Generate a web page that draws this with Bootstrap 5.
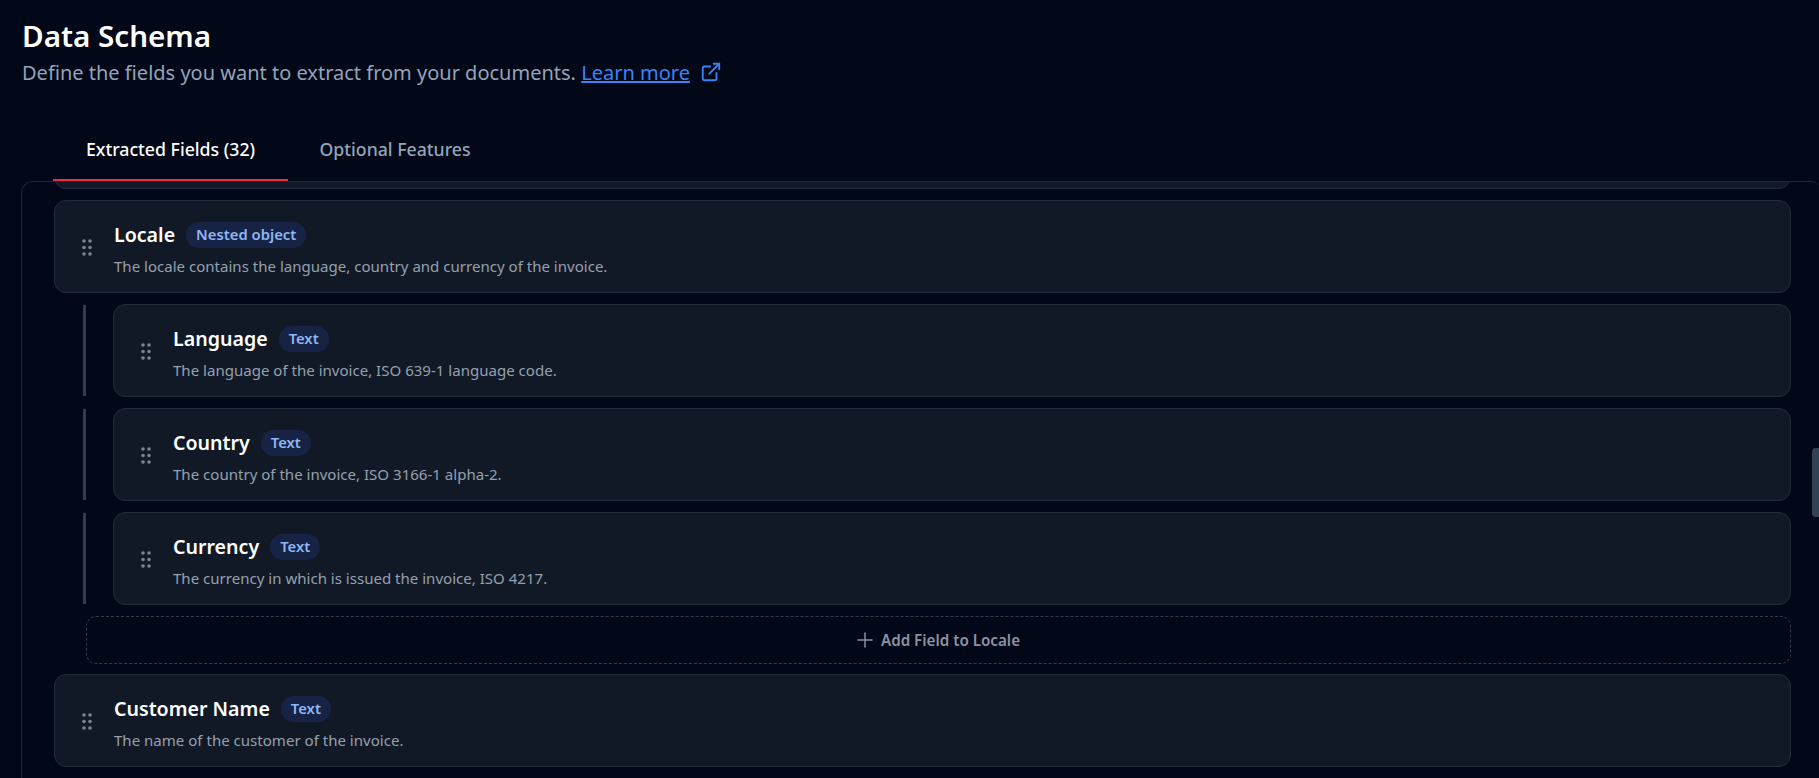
<!DOCTYPE html>
<html lang="en"><head><meta charset="utf-8"><title>Data Schema</title>
<link href="https://cdn.jsdelivr.net/npm/bootstrap@5.3.0/dist/css/bootstrap.min.css" rel="stylesheet">
<style>
html,body{height:100%;overflow:hidden}
body{background:#020817;color:#f8fafc;font-family:"Noto Sans",sans-serif}
.page-shell{height:778px;overflow:hidden;padding:17px 0 0 22px;position:relative}
.page-title{font-size:29.6px;font-weight:600;line-height:38px;margin:0;color:#fff}
.page-sub{font-size:20px;line-height:28px;color:#94a3b8;margin:4px 0 0 0}
.page-sub a{color:#3b82f6;text-decoration:underline}
.ext-icon{width:22px;height:22px;margin-left:10px;vertical-align:-3px;color:#3b82f6}
.tab-row{margin:30px 0 0 31px;height:64px}
.tab-item{display:flex;align-items:center;justify-content:center;height:64px;font-size:17.7px;font-weight:500;color:#94a3b8;padding-top:3px;border-bottom:2px solid transparent;width:214px}
.tab-item.on{color:#fff;border-bottom-color:#ef2b45;width:235px}
.panel-box{border:1px solid #1e2635;border-right:0;border-bottom:0;border-top-left-radius:12px;border-top-right-radius:12px;height:600px;margin:0 -3px 0 -1px;padding:0 31px 0 32px;overflow:hidden}
.field-card{background:#121926;border:1px solid #222b3a;border-radius:12px;height:93px;display:flex;align-items:center;padding:3px 0 0 27px;margin-bottom:11px;flex:none}
.field-card.cut{margin-top:-86px}
.grip{width:10px;height:17px;margin:-2px 22px 0 0;color:#7b8494;flex:none}
.f-name{font-size:19.6px;font-weight:600;color:#fff;line-height:30px}
.f-badge{font-size:14.8px;font-weight:600;background:#172344;color:#8fb6f5;border-radius:13px;padding:0 10px;height:26px;line-height:25px;margin-left:11px;margin-top:-1px}
.f-desc{font-size:15.05px;color:#94a0af;line-height:20px;margin-top:6px}
.child-row{display:flex;margin-left:29px}
.child-bar{width:3px;background:#333d4f;height:91px;margin-top:1px;flex:none;margin-right:27px}
.child-row .field-card{flex:1}
.add-btn{height:48px;margin:0 0 10px 32px;border:1px dashed #333c4d;border-radius:10px;display:flex;align-items:center;justify-content:center;font-size:15.2px;font-weight:600;color:#8b93a3}
.add-btn svg{width:16px;height:16px;margin-right:8px}
.thumb{position:absolute;right:0;top:448px;width:7px;height:69px;background:#334155;border-radius:4px 0 0 4px}
</style></head><body>
<div class="page-shell">
<h1 class="page-title">Data Schema</h1>
<p class="page-sub">Define the fields you want to extract from your documents. <a href="#">Learn more</a><svg class="ext-icon" viewBox="0 0 24 24" fill="none" stroke="currentColor" stroke-width="2" stroke-linecap="round" stroke-linejoin="round"><path d="M18 13v6a2 2 0 0 1-2 2H5a2 2 0 0 1-2-2V8a2 2 0 0 1 2-2h6"/><path d="M15 3h6v6"/><path d="M10 14 21 3"/></svg></p>
<div class="tab-row d-flex"><div class="tab-item on">Extracted Fields (32)</div><div class="tab-item">Optional Features</div></div>
<div class="panel-box">
<div class="field-card cut"></div>
<div class="field-card"><svg class="grip" viewBox="0 0 10 17" fill="currentColor"><circle cx="2" cy="2" r="1.8"/><circle cx="8" cy="2" r="1.8"/><circle cx="2" cy="8.5" r="1.8"/><circle cx="8" cy="8.5" r="1.8"/><circle cx="2" cy="15" r="1.8"/><circle cx="8" cy="15" r="1.8"/></svg><div><div class="d-flex align-items-center"><span class="f-name">Locale</span><span class="f-badge">Nested object</span></div><div class="f-desc">The locale contains the language, country and currency of the invoice.</div></div></div>
<div class="child-row"><div class="child-bar"></div><div class="field-card"><svg class="grip" viewBox="0 0 10 17" fill="currentColor"><circle cx="2" cy="2" r="1.8"/><circle cx="8" cy="2" r="1.8"/><circle cx="2" cy="8.5" r="1.8"/><circle cx="8" cy="8.5" r="1.8"/><circle cx="2" cy="15" r="1.8"/><circle cx="8" cy="15" r="1.8"/></svg><div><div class="d-flex align-items-center"><span class="f-name">Language</span><span class="f-badge">Text</span></div><div class="f-desc">The language of the invoice, ISO 639-1 language code.</div></div></div></div>
<div class="child-row"><div class="child-bar"></div><div class="field-card"><svg class="grip" viewBox="0 0 10 17" fill="currentColor"><circle cx="2" cy="2" r="1.8"/><circle cx="8" cy="2" r="1.8"/><circle cx="2" cy="8.5" r="1.8"/><circle cx="8" cy="8.5" r="1.8"/><circle cx="2" cy="15" r="1.8"/><circle cx="8" cy="15" r="1.8"/></svg><div><div class="d-flex align-items-center"><span class="f-name">Country</span><span class="f-badge">Text</span></div><div class="f-desc">The country of the invoice, ISO 3166-1 alpha-2.</div></div></div></div>
<div class="child-row"><div class="child-bar"></div><div class="field-card"><svg class="grip" viewBox="0 0 10 17" fill="currentColor"><circle cx="2" cy="2" r="1.8"/><circle cx="8" cy="2" r="1.8"/><circle cx="2" cy="8.5" r="1.8"/><circle cx="8" cy="8.5" r="1.8"/><circle cx="2" cy="15" r="1.8"/><circle cx="8" cy="15" r="1.8"/></svg><div><div class="d-flex align-items-center"><span class="f-name">Currency</span><span class="f-badge">Text</span></div><div class="f-desc">The currency in which is issued the invoice, ISO 4217.</div></div></div></div>
<div class="add-btn"><svg viewBox="0 0 16 16" fill="none" stroke="currentColor" stroke-width="1.5" stroke-linecap="round"><path d="M8 1v14M1 8h14"/></svg>Add Field to Locale</div>
<div class="field-card"><svg class="grip" viewBox="0 0 10 17" fill="currentColor"><circle cx="2" cy="2" r="1.8"/><circle cx="8" cy="2" r="1.8"/><circle cx="2" cy="8.5" r="1.8"/><circle cx="8" cy="8.5" r="1.8"/><circle cx="2" cy="15" r="1.8"/><circle cx="8" cy="15" r="1.8"/></svg><div><div class="d-flex align-items-center"><span class="f-name">Customer Name</span><span class="f-badge">Text</span></div><div class="f-desc">The name of the customer of the invoice.</div></div></div>
</div>
<div class="thumb"></div>
</div>
<script src="https://cdn.jsdelivr.net/npm/bootstrap@5.3.0/dist/js/bootstrap.bundle.min.js"></script>
</body></html>
